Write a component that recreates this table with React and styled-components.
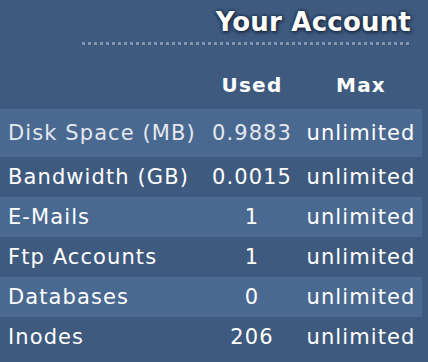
import React from 'react';
import styled, { createGlobalStyle } from 'styled-components';

const GlobalStyle = createGlobalStyle`
  html, body {
    margin: 0;
    padding: 0;
    background: #3e5a7e;
  }
  body {
    font-family: "DejaVu Sans", Verdana, sans-serif;
    color: #ffffff;
  }
`;

const Panel = styled.div`
  width: 428px;
  height: 362px;
  background: #3e5a7e;
  overflow: hidden;
`;

const Title = styled.h2`
  margin: 0;
  padding: 4px 17px 0 0;
  height: 36px;
  text-align: right;
  font-size: 26px;
  font-weight: bold;
  line-height: 36px;
  letter-spacing: 0.2px;
  color: #ffffff;
  text-shadow: 1px 1px 4px #101c30, 0 0 3px #16243c;
`;

const Dots = styled.div`
  margin: 2px 16px 0 82px;
  height: 3px;
  background-image: repeating-linear-gradient(
    to right,
    #8e9fb6 0,
    #8e9fb6 3px,
    transparent 3px,
    transparent 6px
  );
  opacity: 0.85;
`;

const Table = styled.div`
  margin-top: 20px;
  width: 422px;
`;

const Row = styled.div`
  box-sizing: border-box;
  display: grid;
  grid-template-columns: 200px 104px 114px;
  align-items: center;
  height: ${p => p.$tall ? 48 : 40}px;
  background: ${p => p.$shaded ? '#4a6991' : 'transparent'};
  font-size: 21px;
  letter-spacing: 1.1px;
`;

const HeadRow = styled(Row)`
  height: 44px;
  padding-bottom: 4px;
  font-weight: bold;
  font-size: 20px;
  letter-spacing: 1.2px;
`;

const Label = styled.div`
  padding-left: 8px;
  white-space: nowrap;
  color: ${p => p.$muted ? '#e4e8ee' : '#ffffff'};
`;

const Cell = styled.div`
  text-align: center;
  white-space: nowrap;
  color: ${p => p.$muted ? '#e4e8ee' : '#ffffff'};
`;

const rows = [
  ['Disk Space (MB)', '0.9883', 'unlimited'],
  ['Bandwidth (GB)', '0.0015', 'unlimited'],
  ['E-Mails', '1', 'unlimited'],
  ['Ftp Accounts', '1', 'unlimited'],
  ['Databases', '0', 'unlimited'],
  ['Inodes', '206', 'unlimited'],
];

export default function App() {
  return (
    <Panel>
      <GlobalStyle />
      <Title>Your Account</Title>
      <Dots />
      <Table>
        <HeadRow>
          <Label />
          <Cell>Used</Cell>
          <Cell>Max</Cell>
        </HeadRow>
        {rows.map(([name, used, max], i) => (
          <Row key={name} $shaded={i % 2 === 0} $tall={i === 0}>
            <Label $muted={i === 0}>{name}</Label>
            <Cell $muted={i === 0}>{used}</Cell>
            <Cell>{max}</Cell>
          </Row>
        ))}
      </Table>
    </Panel>
  );
}
